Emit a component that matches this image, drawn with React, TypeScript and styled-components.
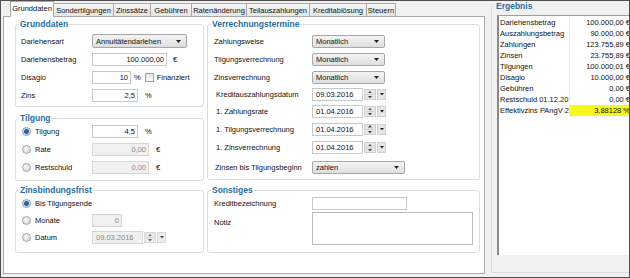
import React from 'react'
import styled, { createGlobalStyle, css } from 'styled-components'

const BLUE = '#2b6d9c'

const GlobalStyle = createGlobalStyle`
    html, body {
        margin: 0;
        padding: 0;
        background: #f0f0f0;
    }
    body {
        font-family: 'Liberation Sans', Arial, sans-serif;
        font-size: 7.5px;
        color: #111;
    }
    * {
        box-sizing: border-box;
    }
`

type TabData = { label: string; w: number }

const tabs: TabData[] = [
    { label: 'Grunddaten', w: 44 },
    { label: 'Sondertilgungen', w: 61 },
    { label: 'Zinssätze', w: 38 },
    { label: 'Gebühren', w: 42 },
    { label: 'Ratenänderung', w: 56 },
    { label: 'Teilauszahlungen', w: 64 },
    { label: 'Kreditablösung', w: 58 },
    { label: 'Steuern', w: 30 }
]

const results = [
    { label: 'Darlehensbetrag', value: '100.000,00 €' },
    { label: 'Auszahlungsbetrag', value: '90.000,00 €' },
    { label: 'Zahlungen', value: '123.755,89 €' },
    { label: 'Zinsen', value: '23.755,89 €' },
    { label: 'Tilgungen', value: '100.000,01 €' },
    { label: 'Disagio', value: '10.000,00 €' },
    { label: 'Gebühren', value: '0,00 €' },
    { label: 'Restschuld 01.12.20', value: '0,00 €' },
    { label: 'Effektivzins PAngV 2', value: '3,88128 %', mark: true }
]

//small drawn arrows
const DownArrow = ({ w = 5 }: { w?: number }) => (
    <svg width={w} height={w * 0.6} viewBox="0 0 5 3">
        <path d="M0 0h5L2.5 3z" fill="#222" />
    </svg>
)

const UpArrow = () => (
    <svg width="4" height="2.4" viewBox="0 0 5 3">
        <path d="M0 3h5L2.5 0z" fill="#444" />
    </svg>
)

function Combo({ value, w, h = 14 }: { value: string; w: number; h?: number }) {
    return (
        <ComboBox $w={w} $h={h}>
            <span>{value}</span>
            <DownArrow />
        </ComboBox>
    )
}

function DateEdit({ value, disabled }: { value: string; disabled?: boolean }) {
    return (
        <DateWrap>
            <TextField $w={51} $align="left" value={value} disabled={disabled} readOnly />
            <SpinBox $disabled={disabled}>
                <UpArrow />
                <SpinLine />
                <svg width="4" height="2.4" viewBox="0 0 5 3">
                    <path d="M0 0h5L2.5 3z" fill="#444" />
                </svg>
            </SpinBox>
            <DropBtn $disabled={disabled}>
                <DownArrow w={4} />
            </DropBtn>
        </DateWrap>
    )
}

function App() {
    return (
        <>
            <GlobalStyle />
            <Window>
                <TabsArea>
                    <TabBar>
                        {tabs.map((t, i) => (
                            <Tab key={t.label} $w={t.w} $active={i === 0}>
                                {t.label}
                            </Tab>
                        ))}
                    </TabBar>
                    <Panel>
                        <Column $w={189}>
                            <Group $h={88}>
                                <Legend>Grunddaten</Legend>
                                <Rows $pt={3}>
                                    <Row>
                                        <Label $w={71}>Darlehensart</Label>
                                        <Combo value="Annuitätendarlehen" w={95} />
                                    </Row>
                                    <Row>
                                        <Label $w={71}>Darlehensbetrag</Label>
                                        <TextField $w={75} value="100.000,00" readOnly />
                                        <Unit $ml={6}>€</Unit>
                                    </Row>
                                    <Row>
                                        <Label $w={71}>Disagio</Label>
                                        <TextField $w={39} value="10" readOnly />
                                        <Unit $ml={3}>%</Unit>
                                        <Check />
                                        <Unit $ml={3}>Finanziert</Unit>
                                    </Row>
                                    <Row>
                                        <Label $w={71}>Zins</Label>
                                        <TextField $w={46} value="2,5" readOnly />
                                        <Unit $ml={7}>%</Unit>
                                    </Row>
                                </Rows>
                            </Group>

                            <Group $h={68} $mt={6}>
                                <Legend>Tilgung</Legend>
                                <Rows>
                                    <Row $h={17}>
                                        <Label $w={71}>
                                            <Radio $checked />
                                            Tilgung
                                        </Label>
                                        <TextField $w={46} value="4,5" readOnly />
                                        <Unit $ml={7}>%</Unit>
                                    </Row>
                                    <Row>
                                        <Label $w={71}>
                                            <Radio />
                                            Rate
                                        </Label>
                                        <TextField $w={57} value="0,00" disabled readOnly />
                                        <Unit $ml={7}>€</Unit>
                                    </Row>
                                    <Row>
                                        <Label $w={71}>
                                            <Radio />
                                            Restschuld
                                        </Label>
                                        <TextField $w={57} value="0,00" disabled readOnly />
                                        <Unit $ml={7}>€</Unit>
                                    </Row>
                                </Rows>
                            </Group>

                            <Group $h={68} $mt={4}>
                                <Legend>Zinsbindungsfrist</Legend>
                                <Rows>
                                    <Row $h={17}>
                                        <Label $w={150}>
                                            <Radio $checked />
                                            Bis Tilgungsende
                                        </Label>
                                    </Row>
                                    <Row $h={17}>
                                        <Label $w={71}>
                                            <Radio />
                                            Monate
                                        </Label>
                                        <TextField $w={30} value="0" disabled readOnly />
                                    </Row>
                                    <Row $h={17}>
                                        <Label $w={71}>
                                            <Radio />
                                            Datum
                                        </Label>
                                        <DateEdit value="09.03.2016" disabled />
                                    </Row>
                                </Rows>
                            </Group>
                        </Column>

                        <Column $w={273}>
                            <Group $h={161}>
                                <Legend>Verrechnungstermine</Legend>
                                <Rows $pt={3}>
                                    <Row>
                                        <Label $w={99} $indent={1}>Zahlungsweise</Label>
                                        <Combo value="Monatlich" w={73} h={13} />
                                    </Row>
                                    <Row>
                                        <Label $w={99} $indent={1}>Tilgungsverrechnung</Label>
                                        <Combo value="Monatlich" w={73} h={13} />
                                    </Row>
                                    <Row>
                                        <Label $w={99} $indent={1}>Zinsverrechnung</Label>
                                        <Combo value="Monatlich" w={73} h={13} />
                                    </Row>
                                    <Row $h={17}>
                                        <Label $w={99} $indent={3}>Kreditauszahlungsdatum</Label>
                                        <DateEdit value="09.03.2016" />
                                    </Row>
                                    <Row $h={17}>
                                        <Label $w={99} $indent={3}>1. Zahlungsrate</Label>
                                        <DateEdit value="01.04.2016" />
                                    </Row>
                                    <Row>
                                        <Label $w={99} $indent={3}>1. Tilgungsverrechnung</Label>
                                        <DateEdit value="01.04.2016" />
                                    </Row>
                                    <Row $h={19}>
                                        <Label $w={99} $indent={3}>1. Zinsverrechnung</Label>
                                        <DateEdit value="01.04.2016" />
                                    </Row>
                                    <Row $h={20}>
                                        <Label $w={99} $indent={2}>Zinsen bis Tilgungsbeginn</Label>
                                        <Combo value="zahlen" w={93} h={13} />
                                    </Row>
                                </Rows>
                            </Group>

                            <Group $h={68} $mt={5}>
                                <Legend>Sonstiges</Legend>
                                <Rows>
                                    <Row $h={17}>
                                        <Label $w={99} $indent={1}>Kreditbezeichnung</Label>
                                        <TextField $w={95} $align="left" value="" readOnly />
                                    </Row>
                                    <Row $h={34} $top>
                                        <Label $w={99} $indent={1} $pt={6}>Notiz</Label>
                                        <Note readOnly value="" />
                                    </Row>
                                </Rows>
                            </Group>
                        </Column>
                    </Panel>
                </TabsArea>

                <ResultGroup>
                    <Legend>Ergebnis</Legend>
                    <ResultList>
                        {results.map((r) => (
                            <ResultRow key={r.label}>
                                <ResultLabel>{r.label}</ResultLabel>
                                <ResultValue $mark={r.mark}>{r.value}</ResultValue>
                            </ResultRow>
                        ))}
                    </ResultList>
                </ResultGroup>
            </Window>
        </>
    )
}

export default App

const Window = styled.div`
    width: 630px;
    height: 278px;
    overflow: hidden;
    display: flex;
    padding: 0 0 3px 2px;
    border: 1px solid #505050;
    background: #f0f0f0;
`

const TabsArea = styled.div`
    width: 482px;
    display: flex;
    flex-direction: column;
`

const TabBar = styled.div`
    display: flex;
    align-items: flex-end;
    height: 15px;
    padding-left: 8px;
`

const Tab = styled.div<{ $w: number; $active?: boolean }>`
    width: ${(p) => p.$w}px;
    height: 13px;
    margin-left: -1px;
    display: flex;
    align-items: center;
    justify-content: center;
    white-space: nowrap;
    border: 1px solid #a9a9a9;
    border-bottom: none;
    background: linear-gradient(#f6f6f6, #e4e4e4);
    color: #111;

    ${(p) =>
        p.$active &&
        css`
            height: 16px;
            margin-bottom: -1px;
            padding-bottom: 2px;
            background: #fff;
            position: relative;
            z-index: 1;
        `}
`

const Panel = styled.div`
    flex: 1;
    display: flex;
    gap: 3px;
    padding: 2px 0 0 11px;
    background: #fff;
    border: 1px solid #a9a9a9;
`

const Column = styled.div<{ $w: number }>`
    width: ${(p) => p.$w}px;
    display: flex;
    flex-direction: column;
`

const Group = styled.fieldset<{ $h: number; $mt?: number }>`
    height: ${(p) => p.$h}px;
    margin: ${(p) => p.$mt ?? 0}px 0 0 0;
    padding: 0 5px;
    min-width: 0;
    border: 1px solid #d9dee3;
    border-radius: 3px;
`

const Legend = styled.legend`
    margin-left: -2px;
    padding: 0 1px;
    font-size: 8.5px;
    line-height: 10px;
    font-weight: bold;
    color: ${BLUE};
`

const Rows = styled.div<{ $pt?: number }>`
    display: flex;
    flex-direction: column;
    padding-top: ${(p) => p.$pt ?? 0}px;
`

const Row = styled.div<{ $h?: number; $top?: boolean }>`
    height: ${(p) => p.$h ?? 18}px;
    display: flex;
    align-items: ${(p) => (p.$top ? 'flex-start' : 'center')};
    white-space: nowrap;
`

const Label = styled.span<{ $w: number; $indent?: number; $pt?: number }>`
    width: ${(p) => p.$w}px;
    flex: none;
    display: flex;
    align-items: center;
    padding-left: ${(p) => p.$indent ?? 0}px;
    padding-top: ${(p) => p.$pt ?? 0}px;
    color: #111;
`

const Unit = styled.span<{ $ml: number }>`
    margin-left: ${(p) => p.$ml}px;
`

const TextField = styled.input<{ $w: number; $align?: 'left' | 'right' }>`
    width: ${(p) => p.$w}px;
    height: 13px;
    flex: none;
    margin: 0;
    padding: 0 2px 0 3px;
    font: inherit;
    font-size: 7.5px;
    color: #111;
    text-align: ${(p) => p.$align ?? 'right'};
    background: #fff;
    border: 1px solid #c6c9cc;
    outline: none;

    &:disabled {
        color: #8c8c8c;
        background: #f0f0f0;
        border-color: #d6d6d6;
    }
`

const Note = styled.textarea`
    width: 161px;
    height: 33px;
    margin: 0;
    padding: 2px;
    font: inherit;
    resize: none;
    background: #fff;
    border: 1px solid #b9bcc0;
    outline: none;
`

const ComboBox = styled.div<{ $w: number; $h: number }>`
    width: ${(p) => p.$w}px;
    height: ${(p) => p.$h}px;
    display: flex;
    align-items: center;
    justify-content: space-between;
    padding: 0 5px 0 3px;
    color: #111;
    border: 1px solid #a7a7a7;
    border-radius: 2px;
    background: linear-gradient(#f4f4f4, #dedede);
`

const DateWrap = styled.div`
    display: flex;
    align-items: center;
    gap: 1px;
`

const SpinBox = styled.div<{ $disabled?: boolean }>`
    width: 12px;
    height: 11px;
    display: flex;
    flex-direction: column;
    align-items: center;
    justify-content: center;
    gap: 1px;
    background: #e6e6e6;
    border: 1px solid #d0d0d0;
    opacity: ${(p) => (p.$disabled ? 0.8 : 1)};
`

const SpinLine = styled.span`
    width: 8px;
    height: 1px;
    background: #cfcfcf;
`

const DropBtn = styled.div<{ $disabled?: boolean }>`
    width: 9px;
    height: 11px;
    display: flex;
    align-items: center;
    justify-content: center;
    background: #e6e6e6;
    border: 1px solid #d0d0d0;
    opacity: ${(p) => (p.$disabled ? 0.8 : 1)};
`

const Radio = styled.span<{ $checked?: boolean }>`
    width: 9px;
    height: 9px;
    flex: none;
    margin: 0 4px 0 1px;
    border-radius: 50%;
    border: 1px solid #a3a3a3;
    background: radial-gradient(circle at 40% 35%, #f8f8f8, #d0d0d0);

    ${(p) =>
        p.$checked &&
        css`
            background: radial-gradient(circle, #2d5f94 0 2px, #9fbcd8 2.6px, #eef2f6 3.4px);
            border-color: #8a9aab;
        `}
`

const Check = styled.span`
    width: 9px;
    height: 9px;
    margin-left: 4px;
    border: 1px solid #a3a3a3;
    background: linear-gradient(#e6e6e6, #fafafa);
`

const ResultGroup = styled.fieldset`
    flex: 1;
    min-width: 0;
    margin: 0 0 1px 6px;
    padding: 4px 0 0 5px;
    border: 1px solid #dcdcdc;
    border-top-color: transparent;
    border-right: none;
`

const ResultList = styled.div`
    height: 240px;
    margin-right: -2px;
    background: #fff;
    border-left: 2px solid #8a8a8a;
    border-top: 1px solid #9e9e9e;
    padding-top: 1px;
`

const ResultRow = styled.div`
    display: grid;
    grid-template-columns: 71px 1fr;
    height: 11px;
    line-height: 11px;
`

const ResultLabel = styled.div`
    padding-left: 1px;
    overflow: hidden;
    white-space: nowrap;
    border-right: 1px solid #ececec;
`

const ResultValue = styled.div<{ $mark?: boolean }>`
    text-align: right;
    padding-right: 1px;
    white-space: nowrap;
    background: ${(p) => (p.$mark ? '#f8f81c' : 'transparent')};
`
